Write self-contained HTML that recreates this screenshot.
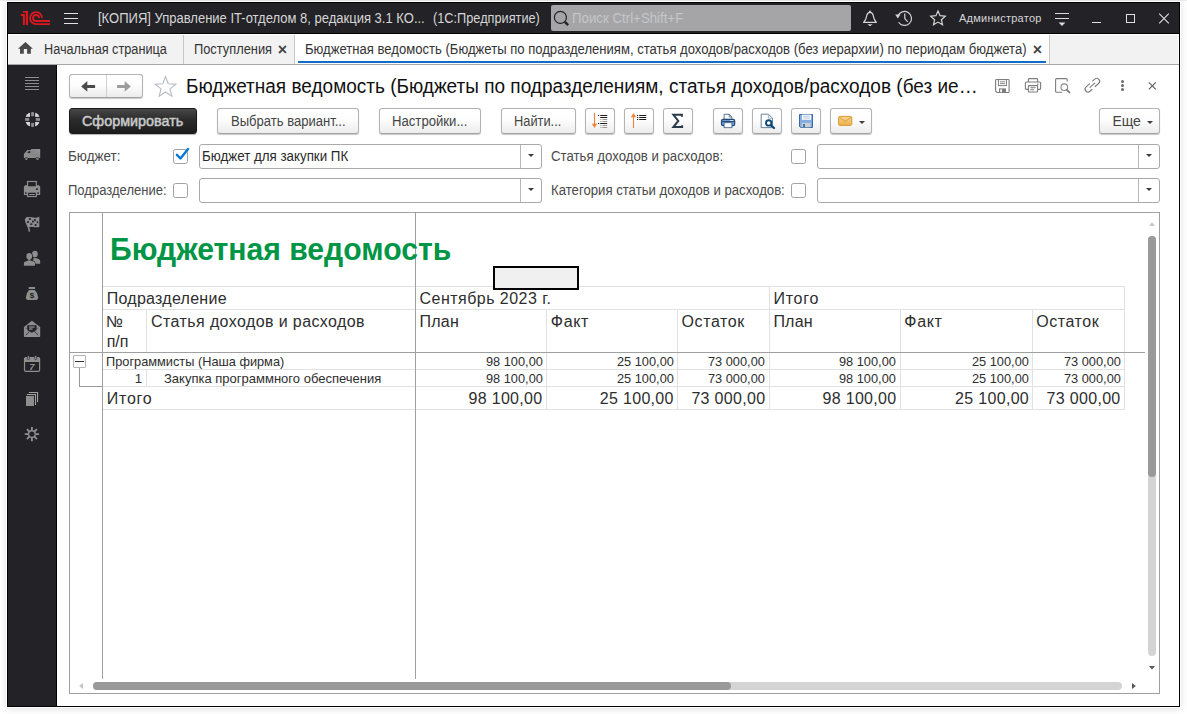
<!DOCTYPE html>
<html lang="ru">
<head>
<meta charset="utf-8">
<title>Бюджетная ведомость</title>
<style>
*{box-sizing:border-box;margin:0;padding:0}
html,body{width:1187px;height:714px;overflow:hidden;background:#fff}
body{font-family:"Liberation Sans",Arial,sans-serif;font-size:13px;color:#333;position:relative}
.a{position:absolute}
.t{position:absolute;white-space:nowrap}
svg{position:absolute;overflow:visible}
#topstrip{left:0;top:0;width:1187px;height:1px;background:#ececec}
#win{left:7px;top:2px;width:1173px;height:705px;border:1px solid #000;background:#fff;box-shadow:0 0 0 1px #fff,0 1px 7px 1px rgba(0,0,0,.13)}
#titlebar{left:8px;top:3px;width:1171px;height:30px;background:#232227}
#tbline{left:8px;top:33px;width:1171px;height:1px;background:#000}
#search{left:551px;top:5px;width:300px;height:26px;background:#a5a5a7;border-radius:2px}
#tabbar{left:8px;top:34px;width:1171px;height:30px;background:#f2f2f2;border-top:1px solid #fff;border-right:1px solid #fff}
#tabline{left:8px;top:64px;width:1171px;height:1px;background:#a6a6a6}
#tabact{left:295px;top:34px;width:754px;height:30px;background:#fff}
.tabsep{position:absolute;top:35px;width:1px;height:29px;background:#c6c6c6}
#tabul{left:298px;top:61px;width:748px;height:2px;background:#0f6fc6}
#sidebar{left:8px;top:65px;width:48px;height:641px;background:#232227}
#sbline{left:56px;top:65px;width:1px;height:641px;background:#000}
.btn{position:absolute;top:108px;height:26px;border:1px solid #b3b3b3;border-bottom-color:#a3a3a3;border-radius:3px;background:linear-gradient(#ffffff 0%,#fdfdfd 45%,#ececec 100%);box-shadow:0 1px 1px rgba(0,0,0,.22)}
#bmain{left:69px;width:128px;border:1px solid #1a1a1a;background:linear-gradient(#474747 0%,#2b2b2b 45%,#1d1d1d 100%);box-shadow:0 1px 1px rgba(0,0,0,.3)}
#nav{left:69px;top:74px;width:74px;height:24px;border:1px solid #b3b3b3;border-bottom-color:#a3a3a3;border-radius:3px;background:linear-gradient(#ffffff 0%,#fdfdfd 45%,#ececec 100%);box-shadow:0 1px 1px rgba(0,0,0,.22)}
#navsep{left:106px;top:75px;width:1px;height:22px;background:#cfcfcf}
.chk{position:absolute;width:15px;height:15px;border:1px solid #a2a2a2;border-radius:2.5px;background:#fff}
.inp{position:absolute;height:25px;border:1px solid #a9a9a9;border-radius:3px;background:#fff}
.dd{position:absolute;width:1px;height:23px;background:#b6b6b6}
.arr{position:absolute;width:0;height:0;border:3px solid transparent;border-top:3px solid #3c3c3c;border-bottom:0}
#rep{left:69px;top:212px;width:1091px;height:482px;border:1px solid #a0a0a0;background:#fff}
.hl{position:absolute;height:1px;background:#e1e1e1}
.vl{position:absolute;width:1px;background:#e1e1e1}
.dl{position:absolute;background:#a0a0a0}
</style>
</head>
<body>
<div id="topstrip" class="a"></div>
<div id="win" class="a"></div>
<div id="titlebar" class="a"></div>
<div id="tbline" class="a"></div>
<div id="search" class="a"></div>
<div id="tabbar" class="a"></div>
<div id="tabact" class="a"></div>
<div id="tabline" class="a"></div>
<div class="tabsep" style="left:183px"></div>
<div class="tabsep" style="left:294px"></div>
<div class="tabsep" style="left:1049px"></div>
<div id="tabul" class="a"></div>
<div id="sidebar" class="a"></div>
<div id="sbline" class="a"></div>

<div id="nav" class="a"></div>
<div id="navsep" class="a"></div>

<div id="bmain" class="btn"></div>
<div class="btn" style="left:217px;width:142px"></div>
<div class="btn" style="left:379px;width:102px"></div>
<div class="btn" style="left:501px;width:75px"></div>
<div class="btn" style="left:585px;width:30px"></div>
<div class="btn" style="left:624px;width:30px"></div>
<div class="btn" style="left:663px;width:30px"></div>
<div class="btn" style="left:713px;width:30px"></div>
<div class="btn" style="left:752px;width:30px"></div>
<div class="btn" style="left:791px;width:30px"></div>
<div class="btn" style="left:830px;width:42px"></div>
<div class="btn" style="left:1099px;width:61px"></div>
<div class="arr" style="left:859px;top:121px"></div>
<div class="arr" style="left:1147px;top:121px"></div>

<div class="chk" style="left:173px;top:149px"></div>
<div class="chk" style="left:173px;top:183px"></div>
<div class="chk" style="left:791px;top:149px"></div>
<div class="chk" style="left:791px;top:183px"></div>
<div class="inp" style="left:199px;top:144px;width:343px"></div>
<div class="inp" style="left:199px;top:178px;width:343px"></div>
<div class="inp" style="left:817px;top:144px;width:343px"></div>
<div class="inp" style="left:817px;top:178px;width:343px"></div>
<div class="dd" style="left:520px;top:145px"></div>
<div class="dd" style="left:520px;top:179px"></div>
<div class="dd" style="left:1138px;top:145px"></div>
<div class="dd" style="left:1138px;top:179px"></div>
<div class="arr" style="left:528px;top:154px"></div>
<div class="arr" style="left:528px;top:188px"></div>
<div class="arr" style="left:1146px;top:154px"></div>
<div class="arr" style="left:1146px;top:188px"></div>
<svg style="left:172px;top:146px" width="19" height="19" viewBox="0 0 19 19"><path d="M4.9 8.8 L8.5 12.5 L16 3" fill="none" stroke="#0a78d6" stroke-width="2.4" stroke-linecap="round" stroke-linejoin="round"/></svg>

<div id="rep" class="a"></div>
<!-- report grid -->
<div class="dl" style="left:102px;top:213px;width:1px;height:466px"></div>
<div class="dl" style="left:415px;top:213px;width:1px;height:466px"></div>
<div class="hl" style="left:103px;top:286px;width:1022px"></div>
<div class="hl" style="left:103px;top:309px;width:1022px"></div>
<div class="hl" style="left:103px;top:369px;width:1022px"></div>
<div class="hl" style="left:103px;top:386px;width:1022px"></div>
<div class="hl" style="left:103px;top:409px;width:1022px"></div>
<div class="vl" style="left:146px;top:309px;height:43px"></div>
<div class="vl" style="left:146px;top:369px;height:17px"></div>
<div class="vl" style="left:546px;top:309px;height:100px"></div>
<div class="vl" style="left:677px;top:309px;height:100px"></div>
<div class="vl" style="left:769px;top:286px;height:123px"></div>
<div class="vl" style="left:900px;top:309px;height:100px"></div>
<div class="vl" style="left:1032px;top:309px;height:100px"></div>
<div class="vl" style="left:1124px;top:286px;height:123px"></div>
<div class="dl" style="left:70px;top:352px;width:1075px;height:1px"></div>
<div class="dl" style="left:415px;top:213px;width:1px;height:466px"></div>
<!-- selected cell -->
<div class="a" style="left:493px;top:266px;width:86px;height:24px;border:2px solid #000;background:#f0f0f0"></div>
<!-- group box and tree -->
<div class="a" style="left:79px;top:367px;width:1px;height:20px;background:#9a9a9a"></div>
<div class="a" style="left:79px;top:386px;width:23px;height:1px;background:#9a9a9a"></div>
<div class="a" style="left:73px;top:355px;width:13px;height:13px;border:1px solid #b4b4b4;border-radius:1px;background:#fff"></div>
<div class="a" style="left:75px;top:361px;width:9px;height:1px;background:#333"></div>
<!-- scrollbars -->
<div class="a" style="left:1148px;top:236px;width:8px;height:420px;border-radius:4px;background:#d4d4d4"></div>
<div class="a" style="left:1148px;top:236px;width:8px;height:241px;border-radius:4px;background:#999"></div>
<div class="a" style="left:93px;top:682px;width:1029px;height:8px;border-radius:4px;background:#d4d4d4"></div>
<div class="a" style="left:93px;top:682px;width:638px;height:8px;border-radius:4px;background:#999"></div>
<svg style="left:1148px;top:221px" width="8" height="6" viewBox="0 0 8 6"><path d="M1 5 L4 1.2 L7 5z" fill="#c4c4c4"/></svg>
<svg style="left:1148px;top:665px" width="8" height="6" viewBox="0 0 8 6"><path d="M1 1 L7 1 L4 4.6z" fill="#555"/></svg>
<svg style="left:78px;top:682px" width="6" height="8" viewBox="0 0 6 8"><path d="M5 1 L5 7 L1.2 4z" fill="#c4c4c4"/></svg>
<svg style="left:1131px;top:682px" width="6" height="8" viewBox="0 0 6 8"><path d="M1 1 L1 7 L4.8 4z" fill="#555"/></svg>
<!-- 1C logo -->
<svg style="left:16px;top:6px" width="40" height="24" viewBox="0 0 40 24">
  <g fill="#d9181f">
    <path d="M6.9 5.05H12V19H9.8V6.75H6.9z"/>
    <path d="M4.9 8.1H8.9V19H6.9V9.9H4.9z"/>
  </g>
  <g fill="none" stroke="#d9181f" stroke-width="1.8">
    <path d="M26.05 12 A6 6 0 1 0 20.05 18.05 H34"/>
    <path d="M23.05 12 A3 3 0 1 0 20.05 15.05 H34" stroke-width="1.9"/>
  </g>
</svg>
<!-- hamburger -->
<div class="a" style="left:64px;top:13px;width:14px;height:1px;background:#e2e2e2"></div>
<div class="a" style="left:64px;top:18px;width:14px;height:1px;background:#e2e2e2"></div>
<div class="a" style="left:64px;top:23px;width:14px;height:1px;background:#e2e2e2"></div>
<!-- search magnifier -->
<svg style="left:553px;top:8px" width="20" height="20" viewBox="0 0 20 20"><circle cx="7.4" cy="9.4" r="6" fill="none" stroke="#242426" stroke-width="1.2"/><path d="M11.8 13.8 L15.2 17.2" stroke="#242426" stroke-width="2.4"/></svg>
<!-- bell -->
<svg style="left:860px;top:8px" width="20" height="20" viewBox="0 0 20 20"><g fill="none" stroke="#d6d6d6" stroke-width="1.2" stroke-linejoin="round"><path d="M3.6 14.4 C6.2 11.6 6.4 9.6 6.8 7.4 C7.2 5.2 8.6 4.3 10 4.3 C11.4 4.3 12.8 5.2 13.2 7.4 C13.6 9.6 13.8 11.6 16.4 14.4 Z"/></g><circle cx="10" cy="3.6" r="1" fill="#d6d6d6"/><path d="M7.4 16.3 H12.6 L10 18.2z" fill="#d6d6d6"/></svg>
<!-- history -->
<svg style="left:894px;top:8px" width="22" height="22" viewBox="0 0 22 22"><g fill="none" stroke="#d6d6d6" stroke-width="1.2"><path d="M3.9 8.2 A7 7 0 1 1 4.6 14.2"/><path d="M10.8 5.6 V10.6 L13.8 13.8"/></g><path d="M1.2 6.6 L6.4 6.4 L3.8 10.4z" fill="#d6d6d6"/></svg>
<!-- star (title) -->
<svg style="left:929px;top:9px" width="18" height="18" viewBox="0 0 18 18"><path d="M9 1.9 L11.1 6.7 L16.3 7.2 L12.4 10.7 L13.5 15.8 L9 13.1 L4.5 15.8 L5.6 10.7 L1.7 7.2 L6.9 6.7z" fill="none" stroke="#d6d6d6" stroke-width="1.2" stroke-linejoin="miter"/></svg>
<!-- menu lines -->
<div class="a" style="left:1055px;top:13px;width:14px;height:1px;background:#dcdcdc"></div>
<div class="a" style="left:1055px;top:18px;width:14px;height:1px;background:#dcdcdc"></div>
<svg style="left:1058px;top:22px" width="8" height="5" viewBox="0 0 8 5"><path d="M0.6 0.6 H7.4 L4 4z" fill="#dcdcdc"/></svg>
<!-- window controls -->
<div class="a" style="left:1092px;top:22px;width:9px;height:1px;background:#e0e0e0"></div>
<div class="a" style="left:1126px;top:14px;width:9px;height:9px;border:1px solid #e0e0e0"></div>
<svg style="left:1158px;top:13px" width="12" height="11" viewBox="0 0 12 11"><path d="M1.2 0.7 L10.8 10.3 M10.8 0.7 L1.2 10.3" stroke="#e0e0e0" stroke-width="1.1"/></svg>
<!-- home -->
<svg style="left:18px;top:42px" width="15" height="12" viewBox="0 0 15 12"><path d="M7.45 0 L14.9 6.85 H12.85 V11.8 H9.1 V6.95 H5.8 V11.8 H2.05 V6.85 H0z" fill="#494949"/></svg>
<!-- nav arrows -->
<svg style="left:81px;top:80px" width="15" height="13" viewBox="0 0 15 13"><path d="M0.2 6.45 L6.3 1.1 V4.95 H14.1 V7.95 H6.3 V11.8z" fill="#4a4a4a"/></svg>
<svg style="left:116px;top:80px" width="16" height="13" viewBox="0 0 16 13"><path d="M14.8 6.45 L8.7 1.1 V4.95 H1.1 V7.95 H8.7 V11.8z" fill="#9c9c9c"/></svg>
<!-- header star -->
<svg style="left:153px;top:74px" width="25" height="24" viewBox="0 0 25 24"><path d="M12.5 2.5 L15.2 9.7 L22.9 10.1 L16.9 14.9 L18.9 22.2 L12.5 18 L6.1 22.2 L8.1 14.9 L2.1 10.1 L9.8 9.7z" fill="#fff" stroke="#b4bcc4" stroke-width="1.1" stroke-linejoin="miter"/></svg>
<!-- SIDEBAR ICONS -->
<div class="a" style="left:25px;top:77px;width:14px;height:1px;background:#8e8e8e"></div>
<div class="a" style="left:25px;top:80px;width:14px;height:1px;background:#8e8e8e"></div>
<div class="a" style="left:25px;top:83px;width:14px;height:1px;background:#8e8e8e"></div>
<div class="a" style="left:25px;top:86px;width:14px;height:1px;background:#8e8e8e"></div>
<div class="a" style="left:25px;top:89px;width:14px;height:1px;background:#8e8e8e"></div>
<!-- lifebuoy -->
<svg style="left:24px;top:111px" width="17" height="17" viewBox="0 0 17 17">
  <defs><clipPath id="lbc"><circle cx="8.55" cy="8.5" r="7.6"/></clipPath></defs>
  <g clip-path="url(#lbc)">
    <g fill="#d4d4d4"><rect x="1.6" y="1.7" width="4.4" height="4.2"/><rect x="11.1" y="1.7" width="4.4" height="4.2"/><rect x="1.6" y="11" width="4.4" height="4.3"/><rect x="11.1" y="11" width="4.4" height="4.3"/></g>
    <g fill="#8c8c8c"><rect x="7.1" y="0.8" width="2.9" height="4.4"/><rect x="7.1" y="11.9" width="2.9" height="4.4"/><rect x="0.8" y="7" width="4.4" height="2.9"/><rect x="11.8" y="7" width="4.4" height="2.9"/></g>
  </g>
</svg>
<!-- truck -->
<svg style="left:23px;top:148px" width="18" height="13" viewBox="0 0 18 13">
  <defs><linearGradient id="trg" x1="0" y1="1" x2="1" y2="0"><stop offset="0" stop-color="#929292"/><stop offset=".5" stop-color="#868686"/><stop offset="1" stop-color="#949494"/></linearGradient></defs>
  <path d="M8.1 0.9 H17.2 V9.9 H0.9 V6.1 L4.2 2 H8.1z" fill="url(#trg)"/>
  <path d="M4.3 4.9 L6 2.9 H7.2 V4.9z" fill="#232227"/>
  <circle cx="3.4" cy="10.7" r="1.65" fill="#232227"/><circle cx="14.5" cy="10.7" r="1.65" fill="#232227"/>
  <circle cx="3.4" cy="10.7" r="1.2" fill="#8e8e8e"/><circle cx="14.5" cy="10.7" r="1.2" fill="#8e8e8e"/>
  <circle cx="3.4" cy="10.7" r=".4" fill="#232227"/><circle cx="14.5" cy="10.7" r=".4" fill="#232227"/>
</svg>
<!-- printer -->
<svg style="left:23px;top:180px" width="18" height="18" viewBox="0 0 18 18">
  <path d="M0.9 6.6 L2.2 5.3 H15.9 L17.2 6.6 V15 H0.9z" fill="#8e8e8e"/>
  <rect x="4.5" y="1.5" width="8.9" height="5.4" fill="#232227" stroke="#8e8e8e" stroke-width="1.2"/>
  <rect x="4.5" y="12.1" width="8.9" height="4.4" fill="#232227" stroke="#8e8e8e" stroke-width="1.2"/>
  <rect x="6.2" y="14" width="5.6" height="1" fill="#8e8e8e"/>
  <rect x="13.1" y="8.3" width="1.7" height="1.7" fill="#232227"/>
  <rect x="2.1" y="12.3" width="1.5" height="1.5" fill="#232227"/><rect x="14.4" y="12.3" width="1.5" height="1.5" fill="#232227"/>
</svg>
<!-- flag -->
<svg style="left:24px;top:216px" width="17" height="17" viewBox="0 0 17 17">
  <path d="M0.9 3.4 Q1.2 1.4 3.4 1.1 Q6.8 0.6 9.6 1.5 T15.3 0.5 V11 Q12 11.7 9.4 11 T5.3 11.1 Q5.9 13.2 6 14.6 L5.6 15.9 L4.7 15.7 Q4.4 12 2.6 9 Q1 6 0.9 3.4z" fill="#8e8e8e"/>
  <g fill="#232227" opacity=".9"><rect x="4.9" y="1.9" width="2" height="2" rx=".5"/><rect x="10" y="2.9" width="2" height="2" rx=".5"/><rect x="3" y="5" width="2" height="2" rx=".5"/><rect x="8" y="4.6" width="2" height="2" rx=".5"/><rect x="12.6" y="5.2" width="1.6" height="2" rx=".5"/><rect x="6.2" y="7.2" width="2.2" height="1.8" rx=".5"/><rect x="10.6" y="8" width="2" height="2" rx=".5"/></g>
</svg>
<!-- people -->
<svg style="left:23px;top:250px" width="18" height="17" viewBox="0 0 18 17">
  <g fill="#8e8e8e">
   <ellipse cx="11.95" cy="4.1" rx="2.8" ry="3.3"/>
   <path d="M10.4 8 L13.4 8.2 Q17.2 9.2 17.2 11 V13.8 H10z"/>
   <path d="M0.4 16.3 V13 Q0.4 11.2 3 10.7 L5 10.2 V9.4 Q2.9 8 2.9 5.8 Q2.9 2.3 6.25 2.3 Q9.6 2.3 9.6 5.8 Q9.6 8 7.5 9.4 V10.2 L10 10.7 Q12.5 11.2 12.5 13 V16.3z" fill="#232227"/>
   <ellipse cx="6.25" cy="6.2" rx="2.85" ry="3.3"/>
   <rect x="5.2" y="8.6" width="2.1" height="2"/>
   <path d="M0.9 15.8 V13 Q0.9 11.6 3 11.2 L5.6 10.4 Q6.3 11.3 7 10.4 L10 11.2 Q12 11.6 12 13 V15.8z"/>
  </g>
</svg>
<!-- money bag -->
<svg style="left:25px;top:286px" width="14" height="15" viewBox="0 0 14 15">
  <rect x="3.7" y="1" width="6.4" height="1.9" rx=".3" fill="#8e8e8e"/>
  <path d="M4 4.1 H9.8 Q13.2 7.4 13.2 11.4 Q13.2 14 11 14 H3 Q0.9 14 0.9 11.4 Q0.9 7.4 4 4.1z" fill="#8e8e8e"/>
  <text x="6.95" y="12.3" font-family="Liberation Sans, sans-serif" font-size="8" font-weight="700" text-anchor="middle" fill="#232227">$</text>
</svg>
<!-- envelope -->
<svg style="left:23px;top:320px" width="18" height="18" viewBox="0 0 18 18">
  <path d="M0.9 7.1 L8.9 0.7 L17.2 7.1 V16.2 Q17.2 17 16.4 17 H1.7 Q0.9 17 0.9 16.2z" fill="#8e8e8e"/>
  <path d="M4.2 5.2 H13.6 V10 L8.9 12.7 L4.2 10z" fill="#232227"/>
  <rect x="6" y="6.4" width="5.6" height="1.3" fill="#8e8e8e"/><rect x="6" y="8.4" width="3.6" height="1.3" fill="#8e8e8e"/>
  <path d="M6.6 11.2 L2.8 15.2 M11.2 11.2 L15.2 15.2" stroke="#232227" stroke-width=".8" fill="none"/>
  <path d="M2.2 7.8 L4.2 8.8 M15.8 7.8 L13.6 8.8" stroke="#232227" stroke-width=".6" fill="none" opacity=".7"/>
</svg>
<!-- calendar -->
<svg style="left:23px;top:355px" width="18" height="18" viewBox="0 0 18 18">
  <rect x="1.5" y="2.6" width="15.1" height="13.8" rx="1.4" fill="none" stroke="#8e8e8e" stroke-width="1.2"/>
  <path d="M1.5 4 Q1.5 2.6 3 2.6 H15.1 Q16.6 2.6 16.6 4 V6.9 H1.5z" fill="#8e8e8e"/>
  <rect x="4.4" y="0.5" width="1.9" height="4.2" rx=".9" fill="#8e8e8e" stroke="#232227" stroke-width=".6"/>
  <rect x="11.7" y="0.5" width="1.9" height="4.2" rx=".9" fill="#8e8e8e" stroke="#232227" stroke-width=".6"/>
  <text x="8.9" y="15" font-family="Liberation Sans, sans-serif" font-size="9.5" font-weight="700" font-style="italic" text-anchor="middle" fill="#8e8e8e">7</text>
</svg>
<!-- documents -->
<svg style="left:25px;top:391px" width="14" height="16" viewBox="0 0 14 16">
  <path d="M3.9 1.45 H12.55 V11" fill="none" stroke="#a0a0a0" stroke-width="1.1"/>
  <path d="M2 3.45 H10.5 V14" fill="none" stroke="#a0a0a0" stroke-width="1.1"/>
  <rect x="1" y="4.9" width="7.95" height="10.1" fill="#8e8e8e"/>
</svg>
<!-- gear -->
<svg style="left:24px;top:426px" width="16" height="16" viewBox="0 0 16 16">
  <g stroke="#8e8e8e" stroke-width="1.9" stroke-linecap="butt">
   <path d="M7.9 1V4.4M7.9 11.8V15.2M0.8 8.1H4.2M11.6 8.1H15M2.9 3.1L5.3 5.5M10.5 10.7L12.9 13.1M12.9 3.1L10.5 5.5M5.3 10.7L2.9 13.1"/>
  </g>
  <circle cx="7.9" cy="8.1" r="3.35" fill="none" stroke="#8e8e8e" stroke-width="1.4"/>
</svg>
<!-- HEADER RIGHT ICONS -->
<!-- save -->
<svg style="left:994px;top:78px" width="17" height="16" viewBox="0 0 17 16">
  <path d="M1.6 2.4 Q1.6 1.5 2.5 1.5 H14.2 Q15.1 1.5 15.1 2.4 V13.6 Q15.1 14.5 14.2 14.5 H3.2 L1.6 13z" fill="none" stroke="#7d7d7d" stroke-width="1.1"/>
  <rect x="4.4" y="1.6" width="8" height="6" fill="none" stroke="#7d7d7d" stroke-width="1"/>
  <path d="M6 3.8H11M6 5.6H11" stroke="#7d7d7d" stroke-width=".9"/>
  <rect x="5" y="10.4" width="7" height="4" fill="#7d7d7d"/>
  <rect x="6.2" y="11.4" width="1.8" height="2.8" fill="#fff"/>
</svg>
<!-- print -->
<svg style="left:1024px;top:77px" width="18" height="17" viewBox="0 0 18 17">
  <g fill="none" stroke="#7d7d7d" stroke-width="1.1">
   <path d="M4.4 5 V2.2 Q4.4 1.6 5 1.6 H13 Q13.6 1.6 13.6 2.2 V5"/>
   <path d="M4.2 12.4 H2.4 Q1.4 12.4 1.4 11.4 V6 Q1.4 5 2.4 5 H15.6 Q16.6 5 16.6 6 V11.4 Q16.6 12.4 15.6 12.4 H13.8"/>
   <rect x="4.4" y="8.6" width="9.2" height="6.4" rx=".6"/>
   <path d="M6.4 10.8H11.6M6.4 12.8H10"/>
  </g>
  <rect x="13" y="6.6" width="1.6" height="1.2" fill="#7d7d7d"/>
</svg>
<!-- preview -->
<svg style="left:1054px;top:77px" width="18" height="17" viewBox="0 0 18 17">
  <path d="M13.2 4.6 V2.6 Q13.2 1.6 12.2 1.6 H2.6 Q1.6 1.6 1.6 2.6 V14.2 Q1.6 15.2 2.6 15.2 H8.2" fill="none" stroke="#7d7d7d" stroke-width="1.1"/>
  <circle cx="10.3" cy="10.2" r="3.3" fill="none" stroke="#8a8a8a" stroke-width="1.1"/>
  <path d="M12.8 12.8 L15.4 15.4" stroke="#7d7d7d" stroke-width="1.9" stroke-linecap="round"/>
</svg>
<!-- link -->
<svg style="left:1083px;top:77px" width="18" height="17" viewBox="0 0 18 17">
  <g transform="translate(9.35 8.2) rotate(-42)" fill="none" stroke="#7d7d7d" stroke-width="1.15" stroke-linecap="round">
   <path d="M-1.2 -2.9 H-5.8 A2.9 2.9 0 0 0 -5.8 2.9 H-3.2"/>
   <path d="M1.2 2.9 H5.8 A2.9 2.9 0 0 0 5.8 -2.9 H3.2"/>
   <path d="M-3.2 0 H3.2"/>
  </g>
</svg>
<!-- dots -->
<div class="a" style="left:1121px;top:80px;width:3px;height:3px;border-radius:1.5px;background:#6a6a6a"></div>
<div class="a" style="left:1121px;top:84px;width:3px;height:3px;border-radius:1.5px;background:#6a6a6a"></div>
<div class="a" style="left:1121px;top:88px;width:3px;height:3px;border-radius:1.5px;background:#6a6a6a"></div>
<!-- close -->
<svg style="left:1148px;top:82px" width="9" height="8" viewBox="0 0 9 8"><path d="M0.8 0.4 L7.8 7.4 M7.8 0.4 L0.8 7.4" stroke="#5a5a5a" stroke-width="1.1"/></svg>

<!-- TOOLBAR ICONS -->
<!-- sort down list -->
<svg style="left:590px;top:112px" width="20" height="18" viewBox="0 0 20 18">
  <path d="M4.5 1 V14" stroke="#f0833c" stroke-width="1.1"/>
  <path d="M1.8 11.8 H7.2 L4.5 16z" fill="#f0833c"/>
  <g fill="#1c1c1c"><rect x="8" y="3" width="1.2" height="1"/><rect x="10.2" y="3" width="7" height="1"/><rect x="10.2" y="5" width="7" height="1"/><rect x="8" y="11" width="1.2" height="1"/><rect x="10.2" y="11" width="7" height="1"/></g>
  <g fill="#9a9a9a"><rect x="10.4" y="7" width="1" height="1"/><rect x="12.4" y="7" width="4.8" height="1"/><rect x="10.4" y="9" width="1" height="1"/><rect x="12.4" y="9" width="4.8" height="1"/><rect x="10.4" y="13" width="1" height="1"/><rect x="12.4" y="13" width="4.8" height="1"/><rect x="10.4" y="15" width="1" height="1"/><rect x="12.4" y="15" width="4.8" height="1"/></g>
</svg>
<!-- sort up list -->
<svg style="left:629px;top:112px" width="20" height="18" viewBox="0 0 20 18">
  <path d="M4.5 3 V16" stroke="#f0833c" stroke-width="1.1"/>
  <path d="M1.8 5.2 H7.2 L4.5 1z" fill="#f0833c"/>
  <g fill="#1c1c1c"><rect x="8" y="3" width="1.2" height="1"/><rect x="10.2" y="3" width="7" height="1"/><rect x="8" y="5" width="1.2" height="1"/><rect x="10.2" y="5" width="7" height="1"/><rect x="8" y="7" width="1.2" height="1"/><rect x="10.2" y="7" width="7" height="1"/></g>
</svg>
<!-- sigma -->
<svg style="left:670px;top:112px" width="15" height="18" viewBox="0 0 15 18">
  <path d="M11.9 4.8 V2.8 H3.4 L8.3 9 L3.4 15.1 H12.1 V13.2" fill="none" stroke="#2b3b4c" stroke-width="2" stroke-linejoin="miter"/>
</svg>
<!-- print (color) -->
<svg style="left:720px;top:113px" width="16" height="16" viewBox="0 0 16 16">
  <path d="M4.1 6.4 V1.3 H9.2 L11.9 4 V6.4z" fill="#fff" stroke="#456789" stroke-width=".9"/>
  <path d="M9.2 1.3 V4 H11.9" fill="none" stroke="#456789" stroke-width=".8"/>
  <rect x="1.5" y="6.3" width="13.2" height="6.4" rx="1.6" fill="#6f9ad0" stroke="#24497a" stroke-width="1.2"/>
  <rect x="2.2" y="8" width="11.8" height="1" fill="#24497a"/>
  <rect x="10.2" y="7" width="3" height=".9" fill="#e8f0fa"/>
  <rect x="4.1" y="9.7" width="7.8" height="5" fill="#fff" stroke="#456789" stroke-width=".9"/>
</svg>
<!-- preview (color) -->
<svg style="left:760px;top:113px" width="16" height="16" viewBox="0 0 16 16">
  <path d="M1.2 1.2 H8.4 L12.5 5.2 V14.6 H1.2z" fill="#fff" stroke="#5a7594" stroke-width=".9"/>
  <path d="M8.4 1.2 V5.2 H12.5" fill="none" stroke="#8fa3ba" stroke-width=".8"/>
  <circle cx="8.7" cy="9.9" r="2.7" fill="#fff" stroke="#0f4a78" stroke-width="1.9"/>
  <path d="M10.9 12.1 L14 15" stroke="#0f4a78" stroke-width="2.3" stroke-linecap="round"/>
</svg>
<!-- save (color) -->
<svg style="left:799px;top:114px" width="15" height="15" viewBox="0 0 15 15">
  <path d="M0.5 0.5 H13.5 V13.5 H1.7 L0.5 12.3z" fill="#84acdf" stroke="#3768a8" stroke-width="1"/>
  <rect x="2.9" y="0.6" width="9.2" height="5.2" fill="#fdfdfe"/>
  <path d="M4.2 2.3H10.8M4.2 4.1H10.8" stroke="#a9c2e4" stroke-width=".9"/>
  <rect x="2.7" y="8.9" width="8.8" height="4.4" fill="#c9d0d2"/>
  <rect x="4.1" y="10" width="1.8" height="3.2" fill="#3768a8"/>
</svg>
<!-- mail -->
<svg style="left:838px;top:115px" width="15" height="11" viewBox="0 0 15 11">
  <defs><linearGradient id="mg" x1="0" y1="0" x2="0" y2="1"><stop offset="0" stop-color="#f8d899"/><stop offset="1" stop-color="#edb04a"/></linearGradient></defs>
  <rect x="0.6" y="1.4" width="13.2" height="9" rx="1.4" fill="url(#mg)" stroke="#d9982c" stroke-width="1"/>
  <path d="M1.4 2.2 L7.2 6.6 L13 2.2" fill="none" stroke="#cf8f25" stroke-width=".8"/>
  <path d="M1.4 9.6 L5.4 5.4 M13 9.6 L9 5.4" fill="none" stroke="#e6b765" stroke-width=".7"/>
</svg>
<div class="t" style="left:97.67px;top:10px;font-size:14px;line-height:16px;color:#d6d6d6;transform:scaleX(0.9295);transform-origin:0 0">[КОПИЯ] Управление IT-отделом 8, редакция 3.1 КО...</div>
<div class="t" style="left:432.69px;top:10px;font-size:14px;line-height:16px;color:#d6d6d6;transform:scaleX(0.9103);transform-origin:0 0">(1С:Предприятие)</div>
<div class="t" style="left:572.35px;top:10px;font-size:14px;line-height:16px;color:#c6c5ca;transform:scaleX(0.9483);transform-origin:0 0">Поиск Ctrl+Shift+F</div>
<div class="t" style="left:959.00px;top:12px;font-size:11px;line-height:12px;color:#d6d6d6;letter-spacing:0.250px">Администратор</div>
<div class="t" style="left:43.89px;top:41px;font-size:14px;line-height:16px;color:#333;transform:scaleX(0.9067);transform-origin:0 0">Начальная страница</div>
<div class="t" style="left:193.68px;top:41px;font-size:14px;line-height:16px;color:#333;transform:scaleX(0.9169);transform-origin:0 0">Поступления</div>
<div class="t" style="left:304.87px;top:41px;font-size:14px;line-height:16px;color:#333;transform:scaleX(0.9342);transform-origin:0 0">Бюджетная ведомость (Бюджеты по подразделениям, статья доходов/расходов (без иерархии) по периодам бюджета)</div>
<div class="t" style="left:277.70px;top:41px;font-size:16px;line-height:17px;color:#444;font-weight:700">×</div>
<div class="t" style="left:1032.80px;top:41px;font-size:16px;line-height:17px;color:#444;font-weight:700">×</div>
<div class="t" style="left:186.35px;top:75px;font-size:19.5px;line-height:22px;color:#111;transform:scaleX(0.9749);transform-origin:0 0">Бюджетная ведомость (Бюджеты по подразделениям, статья доходов/расходов (без ие…</div>
<div class="t" style="left:81.97px;top:113px;font-size:14px;line-height:16px;color:#c9c9c9;-webkit-text-stroke:.5px #c9c9c9;transform:scaleX(1.0258);transform-origin:0 0">Сформировать</div>
<div class="t" style="left:230.57px;top:113px;font-size:14px;line-height:16px;color:#444;transform:scaleX(0.9314);transform-origin:0 0">Выбрать вариант...</div>
<div class="t" style="left:392.26px;top:113px;font-size:14px;line-height:16px;color:#444;transform:scaleX(0.9385);transform-origin:0 0">Настройки...</div>
<div class="t" style="left:514.18px;top:113px;font-size:14px;line-height:16px;color:#444;transform:scaleX(0.9160);transform-origin:0 0">Найти...</div>
<div class="t" style="left:1112.40px;top:113px;font-size:14px;line-height:16px;color:#444;transform:scaleX(1.0000);transform-origin:0 0">Еще</div>
<div class="t" style="left:68.44px;top:148px;font-size:14px;line-height:16px;color:#4a4a4a;transform:scaleX(0.9623);transform-origin:0 0">Бюджет:</div>
<div class="t" style="left:68.47px;top:182px;font-size:14px;line-height:16px;color:#4a4a4a;transform:scaleX(0.9308);transform-origin:0 0">Подразделение:</div>
<div class="t" style="left:551.36px;top:148px;font-size:14px;line-height:16px;color:#4a4a4a;transform:scaleX(0.9439);transform-origin:0 0">Статья доходов и расходов:</div>
<div class="t" style="left:551.36px;top:182px;font-size:14px;line-height:16px;color:#4a4a4a;transform:scaleX(0.9397);transform-origin:0 0">Категория статьи доходов и расходов:</div>
<div class="t" style="left:202.35px;top:148px;font-size:14px;line-height:16px;color:#2a2a2a;transform:scaleX(0.9526);transform-origin:0 0">Бюджет для закупки ПК</div>
<div class="t" style="left:110.13px;top:232px;font-size:30.67px;line-height:35px;color:#009646;font-weight:700;transform:scaleX(0.9834);transform-origin:0 0">Бюджетная ведомость</div>
<div class="t" style="left:106.70px;top:290px;font-size:16px;line-height:17px;color:#2e2e2e;letter-spacing:0.275px">Подразделение</div>
<div class="t" style="left:419.60px;top:290px;font-size:16px;line-height:17px;color:#2e2e2e;letter-spacing:0.460px">Сентябрь 2023 г.</div>
<div class="t" style="left:773.40px;top:290px;font-size:16px;line-height:17px;color:#2e2e2e;letter-spacing:0.775px">Итого</div>
<div class="t" style="left:105.70px;top:313px;font-size:16px;line-height:17px;color:#2e2e2e">№</div>
<div class="t" style="left:106.70px;top:333px;font-size:16px;line-height:17px;color:#2e2e2e">п/п</div>
<div class="t" style="left:151.10px;top:313px;font-size:16px;line-height:17px;color:#2e2e2e;letter-spacing:0.396px">Статья доходов и расходов</div>
<div class="t" style="left:419.60px;top:313px;font-size:16px;line-height:17px;color:#2e2e2e;letter-spacing:0.200px">План</div>
<div class="t" style="left:550.80px;top:313px;font-size:16px;line-height:17px;color:#2e2e2e;letter-spacing:0.667px">Факт</div>
<div class="t" style="left:681.60px;top:313px;font-size:16px;line-height:17px;color:#2e2e2e;letter-spacing:0.567px">Остаток</div>
<div class="t" style="left:773.40px;top:313px;font-size:16px;line-height:17px;color:#2e2e2e;letter-spacing:0.200px">План</div>
<div class="t" style="left:904.30px;top:313px;font-size:16px;line-height:17px;color:#2e2e2e;letter-spacing:0.667px">Факт</div>
<div class="t" style="left:1036.20px;top:313px;font-size:16px;line-height:17px;color:#2e2e2e;letter-spacing:0.567px">Остаток</div>
<div class="t" style="left:105.94px;top:354px;font-size:13.33px;line-height:15px;color:#2e2e2e;transform:scaleX(0.9582);transform-origin:0 0">Программисты (Наша фирма)</div>
<div class="t" style="left:485.64px;top:354px;font-size:13.33px;line-height:15px;color:#2e2e2e;transform:scaleX(0.9586);transform-origin:0 0">98 100,00</div>
<div class="t" style="left:616.74px;top:354px;font-size:13.33px;line-height:15px;color:#2e2e2e;transform:scaleX(0.9586);transform-origin:0 0">25 100,00</div>
<div class="t" style="left:708.34px;top:354px;font-size:13.33px;line-height:15px;color:#2e2e2e;transform:scaleX(0.9586);transform-origin:0 0">73 000,00</div>
<div class="t" style="left:839.44px;top:354px;font-size:13.33px;line-height:15px;color:#2e2e2e;transform:scaleX(0.9586);transform-origin:0 0">98 100,00</div>
<div class="t" style="left:972.04px;top:354px;font-size:13.33px;line-height:15px;color:#2e2e2e;transform:scaleX(0.9586);transform-origin:0 0">25 100,00</div>
<div class="t" style="left:1063.54px;top:354px;font-size:13.33px;line-height:15px;color:#2e2e2e;transform:scaleX(0.9586);transform-origin:0 0">73 000,00</div>
<div class="t" style="left:134.80px;top:371px;font-size:13.33px;line-height:15px;color:#2e2e2e">1</div>
<div class="t" style="left:163.62px;top:371px;font-size:13.33px;line-height:15px;color:#2e2e2e;transform:scaleX(0.9760);transform-origin:0 0">Закупка программного обеспечения</div>
<div class="t" style="left:485.64px;top:371px;font-size:13.33px;line-height:15px;color:#2e2e2e;transform:scaleX(0.9586);transform-origin:0 0">98 100,00</div>
<div class="t" style="left:616.74px;top:371px;font-size:13.33px;line-height:15px;color:#2e2e2e;transform:scaleX(0.9586);transform-origin:0 0">25 100,00</div>
<div class="t" style="left:708.34px;top:371px;font-size:13.33px;line-height:15px;color:#2e2e2e;transform:scaleX(0.9586);transform-origin:0 0">73 000,00</div>
<div class="t" style="left:839.44px;top:371px;font-size:13.33px;line-height:15px;color:#2e2e2e;transform:scaleX(0.9586);transform-origin:0 0">98 100,00</div>
<div class="t" style="left:972.04px;top:371px;font-size:13.33px;line-height:15px;color:#2e2e2e;transform:scaleX(0.9586);transform-origin:0 0">25 100,00</div>
<div class="t" style="left:1063.54px;top:371px;font-size:13.33px;line-height:15px;color:#2e2e2e;transform:scaleX(0.9586);transform-origin:0 0">73 000,00</div>
<div class="t" style="left:106.70px;top:390px;font-size:16px;line-height:17px;color:#2e2e2e;letter-spacing:0.775px">Итого</div>
<div class="t" style="left:468.50px;top:390px;font-size:16px;line-height:17px;color:#2e2e2e;letter-spacing:0.312px">98 100,00</div>
<div class="t" style="left:599.80px;top:390px;font-size:16px;line-height:17px;color:#2e2e2e;letter-spacing:0.312px">25 100,00</div>
<div class="t" style="left:691.40px;top:390px;font-size:16px;line-height:17px;color:#2e2e2e;letter-spacing:0.312px">73 000,00</div>
<div class="t" style="left:822.50px;top:390px;font-size:16px;line-height:17px;color:#2e2e2e;letter-spacing:0.312px">98 100,00</div>
<div class="t" style="left:955.10px;top:390px;font-size:16px;line-height:17px;color:#2e2e2e;letter-spacing:0.312px">25 100,00</div>
<div class="t" style="left:1046.60px;top:390px;font-size:16px;line-height:17px;color:#2e2e2e;letter-spacing:0.312px">73 000,00</div>
</body>
</html>
